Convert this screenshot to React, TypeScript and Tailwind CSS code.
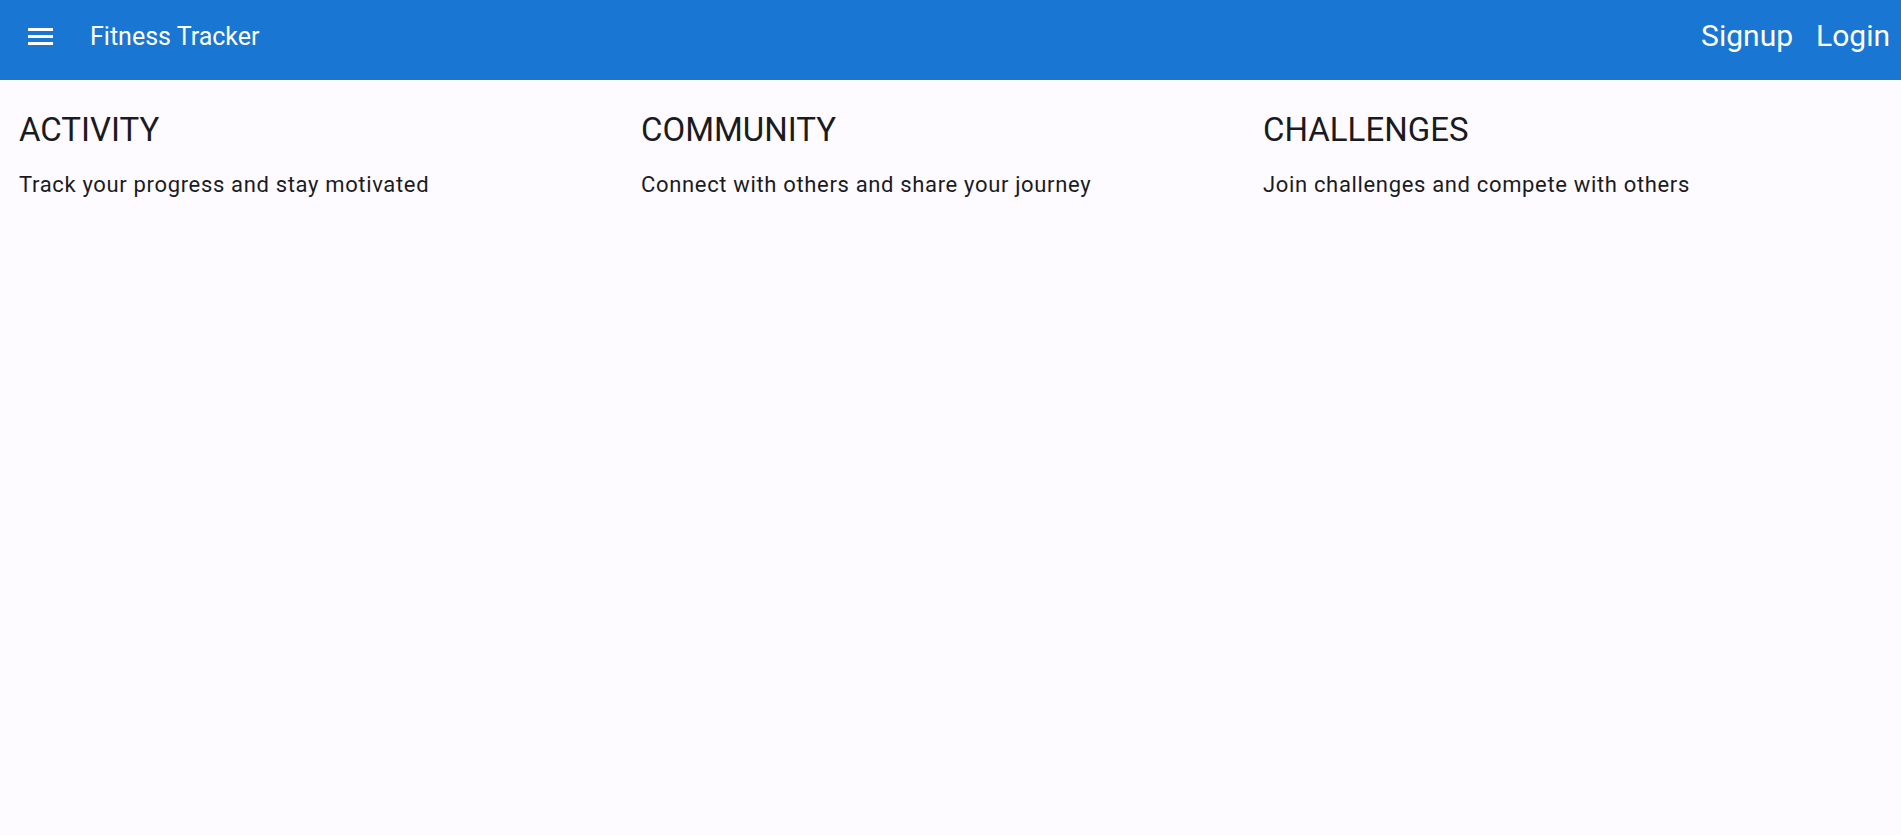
const sections = [
  { title: "ACTIVITY", text: "Track your progress and stay motivated" },
  { title: "COMMUNITY", text: "Connect with others and share your journey" },
  { title: "CHALLENGES", text: "Join challenges and compete with others" },
];

export default function App() {
  return (
    <div className="min-h-screen bg-[#fdfbff] font-['Roboto',sans-serif] text-[#1a1b1f]">
      <header className="flex h-20 items-center justify-between bg-[#1976d2] pr-[11px] pb-2 pl-[13px] text-white">
        <div className="flex items-center gap-[21px]">
          <button type="button" aria-label="Open menu" className="flex size-14 items-center justify-center">
            <svg viewBox="0 0 34 34" className="size-[34px]" fill="currentColor" aria-hidden="true">
              <path d="M4 9h25v3H4zM4 16h25v3H4zM4 23h25v3H4z" />
            </svg>
          </button>
          <span className="pt-0.5 text-[25px] leading-9">Fitness Tracker</span>
        </div>
        <nav className="flex gap-[23px] text-[30px] leading-10">
          <a href="#signup">Signup</a>
          <a href="#login">Login</a>
        </nav>
      </header>
      <main className="grid grid-cols-3 pt-7 pr-4 pl-[19px]">
        {sections.map((s) => (
          <section key={s.title}>
            <h2 className="text-[33px] leading-[44px]">{s.title}</h2>
            <p className="mt-[17px] text-[22px] leading-8 tracking-[0.03em]">{s.text}</p>
          </section>
        ))}
      </main>
    </div>
  );
}
